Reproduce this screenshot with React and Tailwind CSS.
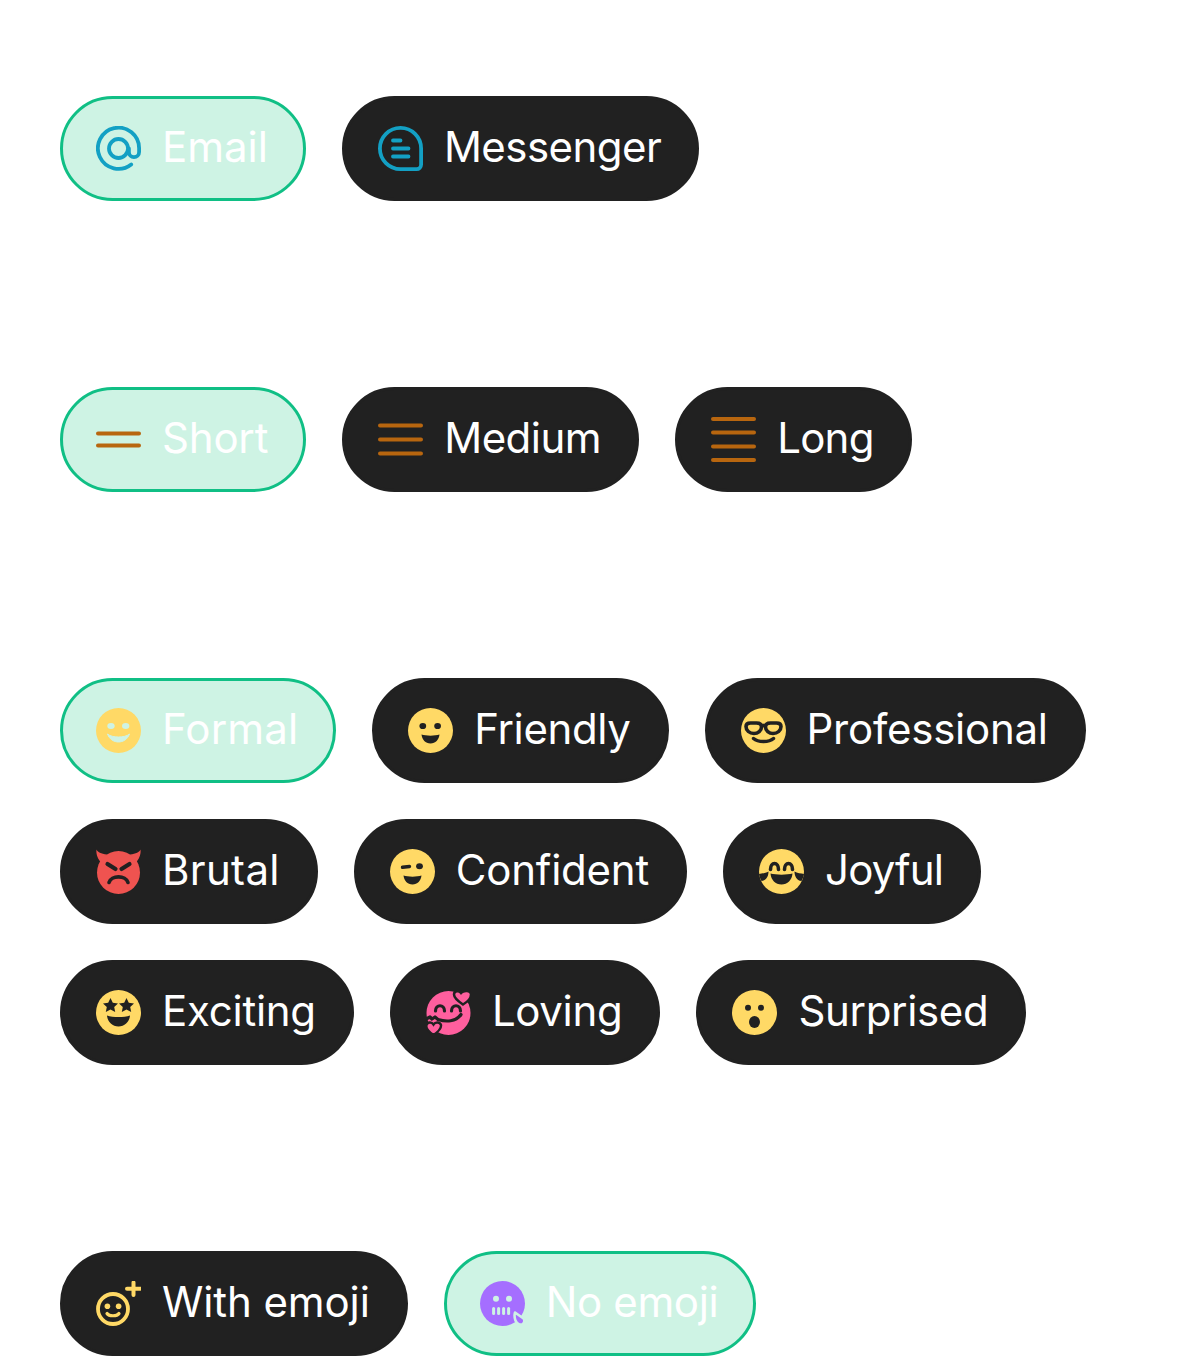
const Y = '#FFD966', D = '#212121', L = '#CEF3E4', B = '#13A0C4', O = '#B8660F';

function Svg({ children }) {
  return <svg width="45" height="45" viewBox="0 0 45 45" fill="none" className="shrink-0">{children}</svg>;
}

const Lines = ({ ys }) => (
  <Svg>
    {ys.map((y) => <path key={y} d={`M2 ${y}H43`} stroke={O} strokeWidth="4" strokeLinecap="round" />)}
  </Svg>
);

const icons = {
  email: () => (
    <Svg>
      <circle cx="22.5" cy="22.5" r="9.5" stroke={B} strokeWidth="3.8" />
      <path d="M35.2 38.5A20.6 20.6 0 1 1 43.1 22.5V26A5.1 5.1 0 0 1 32.9 26V22.5" stroke={B} strokeWidth="3.8" strokeLinecap="round" />
    </Svg>
  ),
  messenger: () => (
    <Svg>
      <path d="M22.5 1.9A20.6 20.6 0 0 1 43.1 22.5V38.6A4.5 4.5 0 0 1 38.6 43.1H22.5A20.6 20.6 0 0 1 22.5 1.9Z" stroke={B} strokeWidth="3.8" />
      <path d="M15 14.5H22.5M15 22.5H30.5M15 30.5H30.5" stroke={B} strokeWidth="3.8" strokeLinecap="round" />
    </Svg>
  ),
  short: () => <Lines ys={[16.5, 28.5]} />,
  medium: () => <Lines ys={[8.5, 22.5, 36.5]} />,
  long: () => <Lines ys={[2, 15.5, 29.5, 43]} />,
  formal: () => (
    <Svg>
      <circle cx="22.5" cy="22.5" r="22.5" fill={Y} />
      <ellipse cx="15" cy="18" rx="3.7" ry="3" fill={L} />
      <ellipse cx="29.7" cy="18" rx="3.7" ry="3" fill={L} />
      <path d="M11.5 26C16 30 29 30 33.5 26C31.5 31.5 27 34 22.5 34C18 34 13.5 31.5 11.5 26Z" fill={L} stroke={L} strokeWidth="1" strokeLinejoin="round" />
    </Svg>
  ),
  friendly: () => (
    <Svg>
      <circle cx="22.5" cy="22.5" r="22.5" fill={Y} />
      <ellipse cx="14.8" cy="18" rx="3.4" ry="3.1" fill={D} />
      <ellipse cx="29.6" cy="18" rx="3.4" ry="3.1" fill={D} />
      <path d="M13.5 26.5C18 28 27 28 31.5 26.5C31 31.5 27.5 35.5 22.5 35.5C17.5 35.5 14 31.5 13.5 26.5Z" fill={D} />
    </Svg>
  ),
  professional: () => (
    <Svg>
      <circle cx="22.5" cy="22.5" r="22.5" fill={Y} />
      <path d="M5 18.5C5 16 7 15 9.5 15H15.5C18.5 15 20.5 16.5 20.5 19C20.5 22.5 17 25.5 13 25.5C8.5 25.5 5 22.5 5 18.5Z" stroke={D} strokeWidth="3.6" />
      <path d="M40 18.5C40 16 38 15 35.5 15H29.5C26.5 15 24.5 16.5 24.5 19C24.5 22.5 28 25.5 32 25.5C36.5 25.5 40 22.5 40 18.5Z" stroke={D} strokeWidth="3.6" />
      <path d="M20 17.5H25" stroke={D} strokeWidth="3.6" />
      <path d="M12.5 30.5C17 34.5 28 34.5 32.5 30.5" stroke={D} strokeWidth="3.4" strokeLinecap="round" />
    </Svg>
  ),
  brutal: () => (
    <Svg>
      <path d="M0.5 0.5C1.5 3 5 5 11 5.5L4.5 13C1 8.5 0 4 0.5 0.5Z" fill="#EF5350" />
      <path d="M44.5 0.5C43.5 3 40 5 34 5.5L40.5 13C44 8.5 45 4 44.5 0.5Z" fill="#EF5350" />
      <circle cx="22.5" cy="23.5" r="21.5" fill="#EF5350" />
      <path d="M11.5 15L19.5 20M33.5 15L25.5 20" stroke={D} strokeWidth="4.2" strokeLinecap="round" />
      <path d="M13 33.5C15 26 30 26 32 33.5" stroke={D} strokeWidth="3.6" strokeLinecap="round" />
    </Svg>
  ),
  confident: () => (
    <Svg>
      <circle cx="22.5" cy="22.5" r="22.5" fill={Y} />
      <path d="M12.5 18.3L19.5 17.5" stroke={D} strokeWidth="3.4" strokeLinecap="round" />
      <ellipse cx="29.5" cy="17.3" rx="3.4" ry="3" fill={D} />
      <path d="M13.5 26.5C18 28 27 28 31.5 26.5C31 31.5 27.5 35.5 22.5 35.5C17.5 35.5 14 31.5 13.5 26.5Z" fill={D} />
    </Svg>
  ),
  joyful: () => (
    <Svg>
      <circle cx="22.5" cy="22.5" r="22.5" fill={Y} />
      <path d="M11.5 20.5C11.5 12.5 19.5 12.5 19.5 20.5M25.5 20.5C25.5 12.5 33.5 12.5 33.5 20.5" stroke={D} strokeWidth="3.6" strokeLinecap="round" />
      <path d="M11.5 24.5C17 26 28 26 33.5 24.5C33 31 28.5 35.5 22.5 35.5C16.5 35.5 12 31 11.5 24.5Z" fill={D} />
      <path d="M0 25C3 24.5 7 24 9.5 22.5C9.5 27 7.5 31.5 2.5 32C1 29 0.3 27 0 25Z" fill={D} />
      <path d="M45 25C42 24.5 38 24 35.5 22.5C35.5 27 37.5 31.5 42.5 32C44 29 44.7 27 45 25Z" fill={D} />
    </Svg>
  ),
  exciting: () => (
    <Svg>
      <circle cx="22.5" cy="22.5" r="22.5" fill={Y} />
      <path d="M14.5 8L16.8 12.8L22 13.5L18.2 17L19.2 22L14.5 19.5L9.8 22L10.8 17L7 13.5L12.2 12.8Z" fill={D} />
      <path d="M30.5 8L32.8 12.8L38 13.5L34.2 17L35.2 22L30.5 19.5L25.8 22L26.8 17L23 13.5L28.2 12.8Z" fill={D} />
      <path d="M11 25.5C17 27.5 28 27.5 34 25.5C33.5 32 28.5 36.5 22.5 36.5C16.5 36.5 11.5 32 11 25.5Z" fill={D} />
    </Svg>
  ),
  loving: () => (
    <Svg>
      <circle cx="22.5" cy="23" r="22" fill="#FF5F9E" />
      <path d="M37 14.5C31 10.5 28 7.5 28 4.5C28 1 32.5 0 35 3C37.5 0 45 0 45 4.5C45 8 42.5 11.5 37 14.5Z" fill="#FF5F9E" stroke={D} strokeWidth="2.5" />
      <path d="M7.5 45C2.5 41.5 -0.5 38.5 0.5 35C1.5 32 5.5 31.5 7.5 34.5C9.5 31.5 14 32 15 35C15.5 38.5 12.5 41.5 7.5 45Z" fill="#FF5F9E" stroke={D} strokeWidth="2.4" />
      <path d="M9.5 21C9.5 14 18.5 14 18.5 21M25.5 21C25.5 14 34.5 14 34.5 21" stroke={D} strokeWidth="3.2" strokeLinecap="round" />
      <path d="M1 28.5L4 27L6 29L9 27L12 29.5C20 32 30 32 35 24.5" stroke={D} strokeWidth="3.2" strokeLinecap="round" strokeLinejoin="round" />
    </Svg>
  ),
  surprised: () => (
    <Svg>
      <circle cx="22.5" cy="22.5" r="22.5" fill={Y} />
      <circle cx="16" cy="17.7" r="3" fill={D} />
      <circle cx="29" cy="17.7" r="3" fill={D} />
      <ellipse cx="22.5" cy="32" rx="5.5" ry="6" fill={D} />
    </Svg>
  ),
  withEmoji: () => (
    <Svg>
      <circle cx="17" cy="28" r="15" stroke={Y} strokeWidth="3.8" />
      <circle cx="11.4" cy="25.3" r="2.8" fill={Y} />
      <circle cx="22.6" cy="25.3" r="2.8" fill={Y} />
      <path d="M11 32.5C13 35.5 21 35.5 23 32.5" stroke={Y} strokeWidth="3.2" strokeLinecap="round" />
      <path d="M37.5 1.5V14M31 7.7H44" stroke={Y} strokeWidth="4" strokeLinecap="round" />
    </Svg>
  ),
  noEmoji: () => (
    <Svg>
      <circle cx="22.5" cy="22.5" r="22.5" fill="#A56EFF" />
      <circle cx="16" cy="17.7" r="3" fill={L} />
      <circle cx="29" cy="17.7" r="3" fill={L} />
      {[13.6, 18.6, 23.6, 28.6].map((x) => <rect key={x} x={x - 1.5} y="26" width="3" height="8" rx="1.5" fill={L} />)}
      <path d="M35 31.5L43.5 37.5C45.5 40 43.5 44.5 39.5 43.5C36 42.5 33.5 37 35 31.5Z" fill="#A56EFF" stroke={L} strokeWidth="2.6" strokeLinejoin="round" />
    </Svg>
  ),
};

function Pill({ icon, label, selected, tracking }) {
  const Icon = icons[icon];
  return (
    <div
      className={`flex items-center gap-[21px] rounded-full border-[3px] py-[24px] pl-[33px] pr-[35px] text-white ${
        selected ? 'border-[#10BF85] bg-[#CEF3E4]' : 'border-[#212121] bg-[#212121]'
      }`}
    >
      <Icon />
      <span className={`mb-[4px] whitespace-nowrap font-['Inter',sans-serif] text-[42px] leading-[47px] ${tracking}`}>{label}</span>
    </div>
  );
}

const groups = [
  [['email', 'Email', true, 'tracking-[0px]'], ['messenger', 'Messenger', false, 'tracking-[-0.55px]']],
  [['short', 'Short', true, 'tracking-[-0.2px]'], ['medium', 'Medium', false, 'tracking-[-0.5px]'], ['long', 'Long', false, 'tracking-[-0.75px]']],
  [
    ['formal', 'Formal', true, 'tracking-[0.16px]'], ['friendly', 'Friendly', false, 'tracking-[-0.37px]'], ['professional', 'Professional', false, 'tracking-[-0.25px]'],
    ['brutal', 'Brutal', false, 'tracking-[0.33px]'], ['confident', 'Confident', false, 'tracking-[-0.22px]'], ['joyful', 'Joyful', false, 'tracking-[-0.83px]'],
    ['exciting', 'Exciting', false, 'tracking-[-0.25px]'], ['loving', 'Loving', false, 'tracking-[-0.33px]'], ['surprised', 'Surprised', false, 'tracking-[-0.33px]'],
  ],
  [['withEmoji', 'With emoji', false, 'tracking-[-0.1px]'], ['noEmoji', 'No emoji', true, 'tracking-[-0.37px]']],
];

export default function App() {
  return (
    <div className="flex min-h-[1356px] flex-col gap-[186px] bg-white px-[60px] pt-[96px]">
      {groups.map((g, i) => (
        <div key={i} className="flex flex-wrap gap-[36px]">
          {g.map(([icon, label, selected, tracking]) => (
            <Pill key={label} icon={icon} label={label} selected={selected} tracking={tracking} />
          ))}
        </div>
      ))}
    </div>
  );
}
